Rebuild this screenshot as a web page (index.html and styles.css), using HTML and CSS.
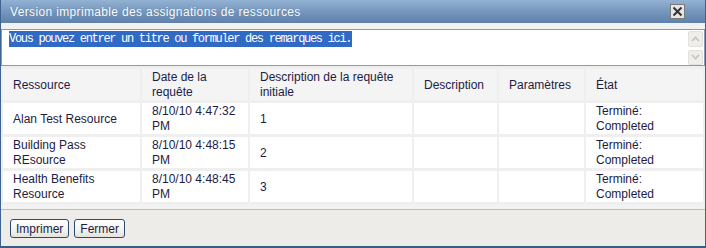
FILE: index.html
```html
<!DOCTYPE html>
<html lang="fr">
  <head>
    <meta charset="utf-8" />
    <title>Version imprimable des assignations de ressources</title>
    <link rel="stylesheet" href="styles.css">
  </head>
  <body>
    <div class="dialog">
      <div class="titlebar">
        <span class="title">Version imprimable des assignations de ressources</span>
        <span class="close">
          <svg width="11" height="11" viewBox="0 0 11 11"><path d="M1.5 1.5 L9.5 9.5 M9.5 1.5 L1.5 9.5" stroke="#333" stroke-width="2"/></svg>
        </span>
      </div>
      <div class="content">
        <div class="notes">
          <div class="notes-text"><span class="selected">Vous pouvez entrer un titre ou formuler des remarques ici.</span></div>
          <div class="scrollbar">
            <span class="scroll-btn">
              <svg width="9" height="6" viewBox="0 0 9 6"><path d="M1 5 L4.5 1.5 L8 5" fill="none" stroke="#c4c4bc" stroke-width="1.6"/></svg>
            </span>
            <span class="scroll-btn">
              <svg width="9" height="6" viewBox="0 0 9 6"><path d="M1 1 L4.5 4.5 L8 1" fill="none" stroke="#c4c4bc" stroke-width="1.6"/></svg>
            </span>
          </div>
        </div>
        <table class="grid">
          <colgroup>
            <col style="width:137px"><col style="width:106px"><col style="width:162px">
            <col style="width:83px"><col style="width:85px"><col style="width:117px">
          </colgroup>
          <thead>
            <tr>
              <th>Ressource</th>
              <th>Date de la requête</th>
              <th>Description de la requête initiale</th>
              <th>Description</th>
              <th>Paramètres</th>
              <th>État</th>
            </tr>
          </thead>
          <tbody>
            <tr>
              <td>Alan Test Resource</td>
              <td>8/10/10 4:47:32 PM</td>
              <td>1</td>
              <td></td>
              <td></td>
              <td>Terminé: Completed</td>
            </tr>
            <tr>
              <td>Building Pass REsource</td>
              <td>8/10/10 4:48:15 PM</td>
              <td>2</td>
              <td></td>
              <td></td>
              <td>Terminé: Completed</td>
            </tr>
            <tr>
              <td>Health Benefits Resource</td>
              <td>8/10/10 4:48:45 PM</td>
              <td>3</td>
              <td></td>
              <td></td>
              <td>Terminé: Completed</td>
            </tr>
          </tbody>
        </table>
      </div>
      <div class="buttons">
        <button class="btn">Imprimer</button>
        <button class="btn">Fermer</button>
      </div>
    </div>
  </body>
</html>
```

FILE: styles.css
```css
* {
  margin: 0;
  padding: 0;
  box-sizing: border-box;
}
body {
  width: 706px;
  height: 248px;
  overflow: hidden;
  background: #ffffff;
  font-family: "Liberation Sans", Arial, sans-serif;
  font-size: 12px;
  color: #1c1c44;
}
.dialog {
  width: 706px;
  height: 248px;
  border: 1px solid #3f6390;
  border-top: 0;
  border-bottom: 2px solid #3a5d88;
  display: flex;
  flex-direction: column;
  background: #f2f2f2;
}
.titlebar {
  height: 23px;
  flex: none;
  display: flex;
  align-items: center;
  justify-content: space-between;
  padding: 0 20px 0 9px;
  background: linear-gradient(to bottom, #93b2d3, #7696bd 50%, #5e82ab);
}
.title {
  color: #ffffff;
  font-size: 12px;
  letter-spacing: 0.35px;
  text-shadow: 0 0 1px #4d6e96;
}
.close {
  width: 15px;
  height: 15px;
  display: flex;
  align-items: center;
  justify-content: center;
  background: #e6e6e6;
  border: 1px solid #7b7b7b;
}
.content {
  flex: 1;
  padding-top: 6px;
}
.notes {
  height: 37px;
  display: flex;
  background: #ffffff;
  border: 1px solid #7f9db9;
}
.notes-text {
  flex: 1;
  padding: 1px 0 0 7px;
  font-family: "Liberation Mono", "Courier New", monospace;
  font-size: 12px;
  letter-spacing: -1.3px;
  line-height: 16px;
}
.selected {
  background: #316ac5;
  color: #ffffff;
  padding: 1px 1px 1px 0;
}
.scrollbar {
  width: 16px;
  display: flex;
  flex-direction: column;
  gap: 3px;
  padding: 1px 1px 0 0;
}
.scroll-btn {
  height: 16px;
  display: flex;
  align-items: center;
  justify-content: center;
  background: #efeeea;
  border: 1px solid #e2e1db;
  border-radius: 2px;
}
.grid {
  width: 704px;
  table-layout: fixed;
  border-collapse: separate;
  border-spacing: 2px 3px;
  background: #efefef;
}
.grid th {
  height: 31px;
  padding: 1px 4px 0 10px;
  text-align: left;
  font-weight: normal;
  line-height: 15px;
  vertical-align: middle;
  background: #f4f4f4;
}
.grid td {
  height: 31px;
  padding: 1px 4px 0 10px;
  line-height: 15px;
  vertical-align: middle;
  background: #ffffff;
}
.buttons {
  height: 37px;
  flex: none;
  display: flex;
  gap: 5px;
  padding: 9px 0 0 9px;
  background: #edece9;
  border-top: 1px solid #bdbdbd;
}
.btn {
  height: 19px;
  padding: 0 5px;
  font-family: "Liberation Sans", Arial, sans-serif;
  font-size: 12px;
  color: #1c1c44;
  background: linear-gradient(to bottom, #ffffff, #f3f2ee 60%, #e4e2dc);
  border: 1px solid #2c4a6e;
  border-radius: 3px;
}
```
